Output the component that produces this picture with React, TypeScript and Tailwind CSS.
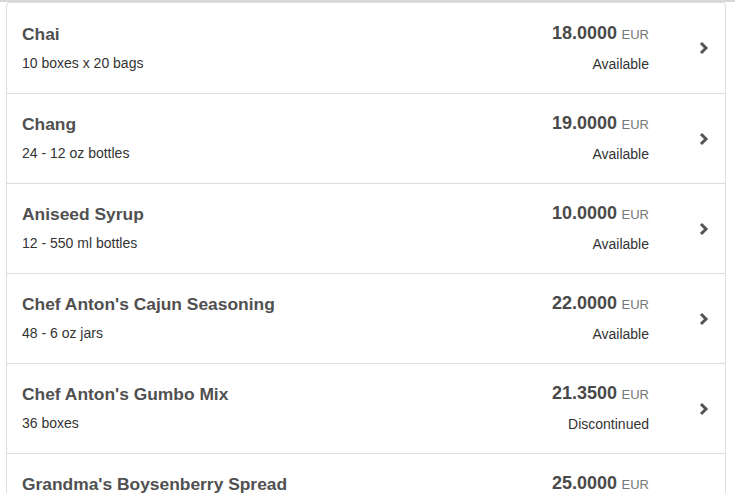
const products = [
  { name: "Chai", unit: "10 boxes x 20 bags", price: "18.0000", status: "Available" },
  { name: "Chang", unit: "24 - 12 oz bottles", price: "19.0000", status: "Available" },
  { name: "Aniseed Syrup", unit: "12 - 550 ml bottles", price: "10.0000", status: "Available" },
  { name: "Chef Anton's Cajun Seasoning", unit: "48 - 6 oz jars", price: "22.0000", status: "Available" },
  { name: "Chef Anton's Gumbo Mix", unit: "36 boxes", price: "21.3500", status: "Discontinued" },
  { name: "Grandma's Boysenberry Spread", unit: "12 - 8 oz jars", price: "25.0000", status: "Available" },
];

function Chevron() {
  return (
    <svg width="10" height="14" viewBox="0 0 10 14" className="shrink-0 ml-[1px]">
      <polyline
        points="2,2 7,7 2,12"
        fill="none"
        stroke="#555555"
        strokeWidth="3"
        strokeLinejoin="miter"
      />
    </svg>
  );
}

export default function App() {
  return (
    <div
      className="w-[735px] h-[493px] overflow-hidden bg-white"
      style={{ fontFamily: '"Liberation Sans", Arial, sans-serif' }}
    >
      <div className="h-[2px] border-t-2 border-[#d8d8d8]" />
      <div className="ml-[6px] w-[720px] border border-[#dddddd] rounded-t-[4px]">
        {products.map((p, i) => (
          <div
            key={p.name}
            className={
              "flex items-center h-[90px] pl-[15px] pr-[16px] " +
              (i > 0 ? "border-t border-[#dddddd]" : "")
            }
          >
            <div className="flex-1 min-w-0 -mt-[2px]">
              <div className="text-[17.4px] leading-[20px] text-[#505050] font-semibold">
                {p.name}
              </div>
              <div className="mt-[11px] text-[14px] leading-[16px] text-[#333333]">{p.unit}</div>
            </div>
            <div className="flex flex-col items-end mr-[49px] -mt-[2px]">
              <div className="leading-[20px]">
                <span className="text-[18px] font-bold text-[#4a4a4a]">{p.price}</span>{" "}
                <span className="text-[13px] text-[#777777]">EUR</span>
              </div>
              <div className="mt-[11px] text-[14px] leading-[16px] text-[#333333]">{p.status}</div>
            </div>
            <Chevron />
          </div>
        ))}
      </div>
    </div>
  );
}
